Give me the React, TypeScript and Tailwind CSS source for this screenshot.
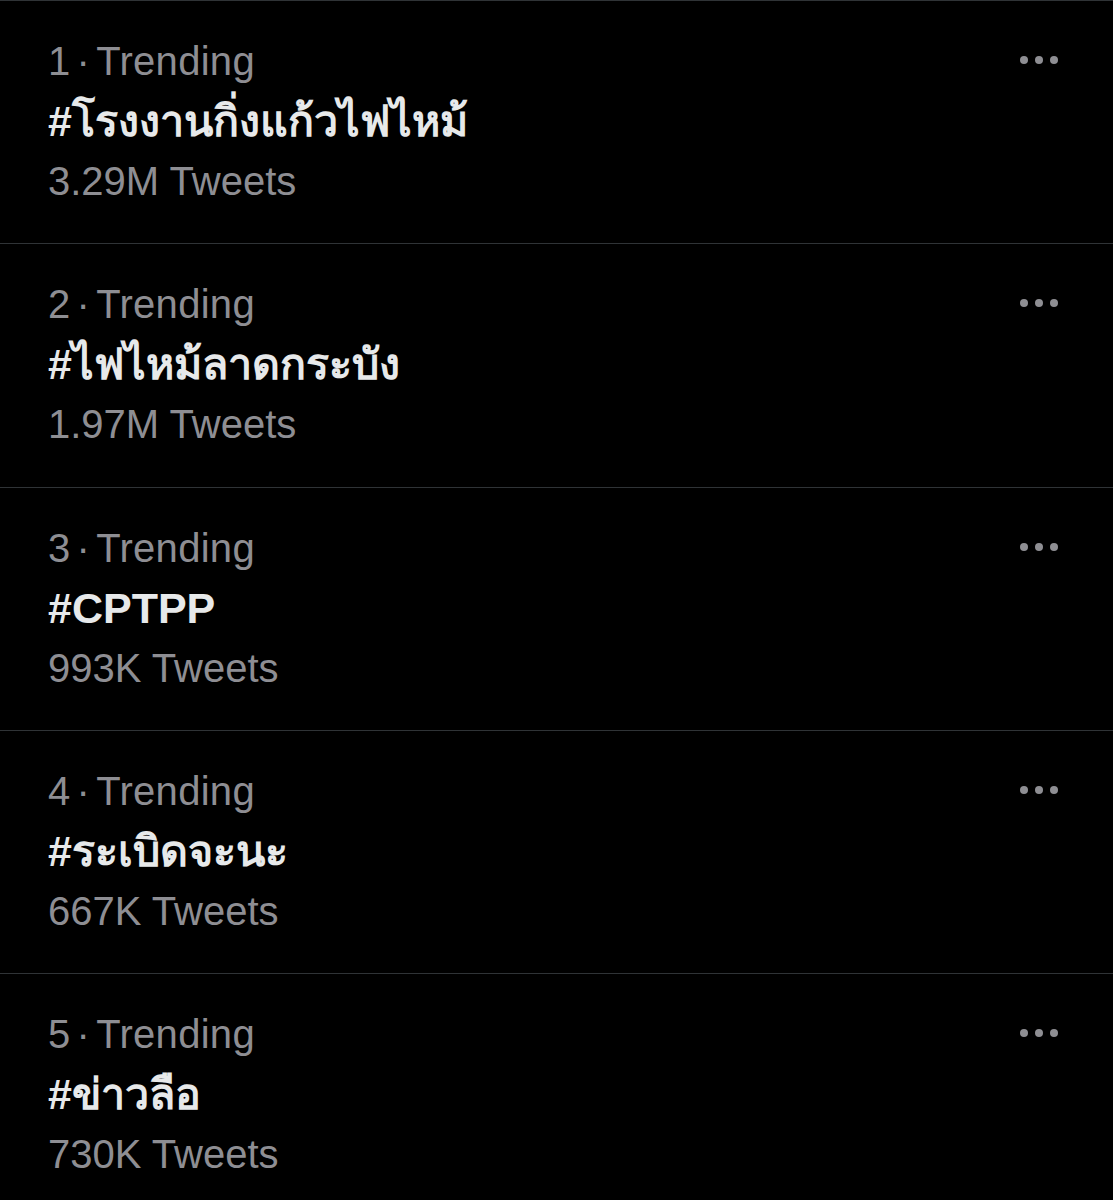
const TRENDS = [
  { rank: 1, tag: '#โรงงานกิ่งแก้วไฟไหม้', count: '3.29M Tweets' },
  { rank: 2, tag: '#ไฟไหม้ลาดกระบัง', count: '1.97M Tweets' },
  { rank: 3, tag: '#CPTPP', count: '993K Tweets' },
  { rank: 4, tag: '#ระเบิดจะนะ', count: '667K Tweets' },
  { rank: 5, tag: '#ข่าวลือ', count: '730K Tweets' },
]

function MoreDots() {
  return (
    <div className="self-start flex items-center gap-[7px] pt-[55px]">
      <span className="block w-2 h-2 rounded-full bg-[#8e8e93]" />
      <span className="block w-2 h-2 rounded-full bg-[#8e8e93]" />
      <span className="block w-2 h-2 rounded-full bg-[#8e8e93]" />
    </div>
  )
}

function TrendRow({ rank, tag, count }: { rank: number; tag: string; count: string }) {
  return (
    <div className="h-[243.25px] border-t border-[#2f3336] flex items-start justify-between pl-12 pr-[55px]">
      <div className="pt-[30px] leading-[60px]">
        <div className="text-[40px] text-[#8e8e93] tracking-[0.3px]">
          {rank}<span className="mx-[6px]">·</span>Trending
        </div>
        <div className="text-[43px] font-bold text-[#e7e9ea]">{tag}</div>
        <div className="text-[40px] text-[#8e8e93]">{count}</div>
      </div>
      <MoreDots />
    </div>
  )
}

export default function App() {
  return (
    <div
      className="w-[1113px] h-[1200px] bg-black overflow-hidden"
      style={{ fontFamily: '"Liberation Sans", "DejaVu Sans", sans-serif' }}
    >
      {TRENDS.map((t) => (
        <TrendRow key={t.rank} {...t} />
      ))}
    </div>
  )
}
